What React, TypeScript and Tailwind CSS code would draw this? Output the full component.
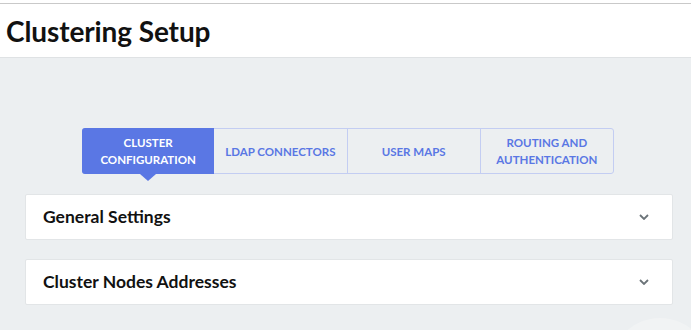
import React from "react";

const tabs = [
  { label: ["CLUSTER", "CONFIGURATION"], active: true },
  { label: ["LDAP CONNECTORS"], active: false },
  { label: ["USER MAPS"], active: false },
  { label: ["ROUTING AND", "AUTHENTICATION"], active: false },
];

function Chevron() {
  return (
    <svg width="10" height="6" viewBox="0 0 10 6" className="text-[#6b7378]">
      <path d="M1 1 L5 5 L9 1" fill="none" stroke="currentColor" strokeWidth="1.8" />
    </svg>
  );
}

export default function App() {
  return (
    <div
      className="relative w-[691px] h-[330px] overflow-hidden bg-[#eceff1]"
      style={{ fontFamily: "Lato, 'Noto Sans', sans-serif" }}
    >
      <div className="bg-white pt-[3px] border-b border-[#dfe2e4]">
        <div className="border-t border-[#c9c9c9] h-[54px] flex items-center pl-[6px]">
          <h1 className="text-[28px] font-bold text-[#111] tracking-[-0.1px] leading-none">Clustering Setup</h1>
        </div>
      </div>
      <div className="flex pt-[70px] pl-[82px]">
        <div className="flex w-[532px] h-[46px] rounded-[3px] border border-[#c3cdf2] bg-[#eceff1]">
          {tabs.map((t, i) => (
            <div
              key={i}
              className={
                "relative flex-1 flex flex-col items-center justify-center text-[11.5px] font-bold leading-[17px] text-center " +
                (t.active
                  ? "bg-[#5a77e4] text-white -my-px -ml-px rounded-l-[3px]"
                  : "text-[#5a77e4] " + (i < tabs.length - 1 ? "border-r border-[#c3cdf2]" : ""))
              }
            >
              {t.label.map((l) => (
                <span key={l}>{l}</span>
              ))}
              {t.active && (
                <span className="absolute left-1/2 -translate-x-1/2 top-full w-0 h-0 border-l-[8px] border-r-[8px] border-t-[7px] border-l-transparent border-r-transparent border-t-[#5a77e4]" />
              )}
            </div>
          ))}
        </div>
      </div>
      <div className="mt-[20px] ml-[25px] w-[648px] flex flex-col gap-[19px]">
        {["General Settings", "Cluster Nodes Addresses"].map((s) => (
          <div
            key={s}
            className="h-[46px] bg-white rounded-[2px] border border-[#e2e5e7] flex items-center justify-between pl-[17px] pr-[23px]"
          >
            <span className="text-[17.5px] font-bold text-[#111]">{s}</span>
            <Chevron />
          </div>
        ))}
      </div>
      <div className="absolute left-[610px] top-[318px] w-[100px] h-[100px] rounded-full bg-[#f1f3f4]" />
    </div>
  );
}
